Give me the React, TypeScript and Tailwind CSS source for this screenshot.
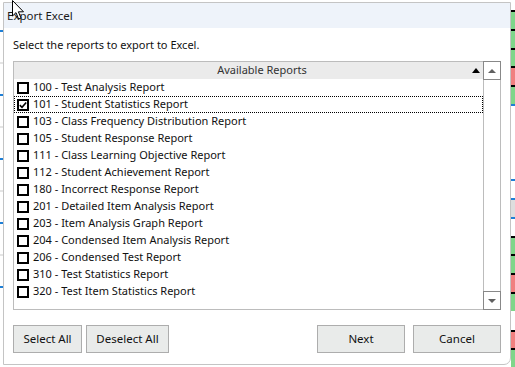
import { useState } from "react";

const REPORTS = [
  "100 - Test Analysis Report",
  "101 - Student Statistics Report",
  "103 - Class Frequency Distribution Report",
  "105 - Student Response Report",
  "111 - Class Learning Objective Report",
  "112 - Student Achievement Report",
  "180 - Incorrect Response Report",
  "201 - Detailed Item Analysis Report",
  "203 - Item Analysis Graph Report",
  "204 - Condensed Item Analysis Report",
  "206 - Condensed Test Report",
  "310 - Test Statistics Report",
  "320 - Test Item Statistics Report",
];

// cells of the sheet peeking out on the right edge behind the dialog
const STRIP = [
  "g", "g", "g", "r", "g", "b", "w", "w", "w", "b", "gr", "b", "g", "g", "r", "g", "w", "r", "g",
];

function Checkbox({ checked }: { checked: boolean }) {
  return (
    <span className="flex h-[12px] w-[12px] shrink-0 items-center justify-center border-2 border-black bg-white">
      {checked && (
        <svg width="8" height="8" viewBox="0 0 8 8">
          <path d="M0.8 4.2 L3 6.3 L7.2 1.4" fill="none" stroke="#000" strokeWidth="1.6" />
        </svg>
      )}
    </span>
  );
}

function Btn({ label, w }: { label: string; w: string }) {
  return (
    <button
      className={`${w} h-[28px] border border-[#adadad] bg-[#e9ebea] text-[11.5px] text-[#111]`}
    >
      {label}
    </button>
  );
}

export default function App() {
  const [checked, setChecked] = useState<Record<number, boolean>>({ 1: true });

  return (
    <div
      className="relative h-[367px] w-[515px] overflow-hidden bg-white"
      style={{ fontFamily: '"Noto Sans", "Open Sans", sans-serif' }}
    >
      {/* background sheet */}
      <div className="absolute left-0 top-0 flex h-full w-[3px] flex-col gap-[30px] pt-[30px]">
        {[0, 1, 2, 3, 4, 5, 6, 7, 8].map((i) => (
          <div key={i} className={`h-[2px] ${i % 2 ? "bg-[#e4e4e4]" : "bg-[#1f7fd6]"}`} />
        ))}
      </div>
      <div className="absolute right-0 top-0 flex h-full w-[4px] flex-col pt-[10px]">
        {STRIP.map((c, i) => (
          <div
            key={i}
            className={`h-[19px] border-t-2 ${
              c === "g"
                ? "border-black bg-[#7fd68a]"
                : c === "r"
                  ? "border-black bg-[#f08080]"
                  : c === "b"
                    ? "border-[#1f7fd6] bg-white"
                    : c === "gr"
                      ? "border-[#1f7fd6] bg-[#dedede]"
                      : "border-transparent bg-white"
            }`}
          />
        ))}
      </div>

      {/* dialog window */}
      <div className="absolute left-[3px] top-[2px] flex h-[363px] w-[508px] flex-col rounded-br-[7px] border border-[#c4c4c4] bg-white">
        <div className="flex h-[25px] items-center bg-[#eef3fa] pl-[3px] text-[11.5px] text-[#1a1a1a]">
          Export Excel
        </div>

        <div className="flex flex-1 flex-col pl-[9px] pr-[9px] pt-[9px]">
          <div className="text-[11px] leading-[16px] text-[#111]">
            Select the reports to export to Excel.
          </div>

          <div className="mt-[8px] flex h-[249px] border border-[#bcbcbc]">
            <div className="flex flex-1 flex-col">
              <div className="relative flex h-[17px] items-center justify-center bg-[#ebebeb] pl-[27px] text-[11px] text-[#333]">
                Available Reports
                <svg
                  className="absolute right-[3px] top-[6px]"
                  width="8"
                  height="5"
                  viewBox="0 0 8 5"
                >
                  <path d="M0 5 L4 0 L8 5 Z" fill="#000" />
                </svg>
              </div>
              {REPORTS.map((r, i) => (
                <div
                  key={r}
                  onClick={() => setChecked({ ...checked, [i]: !checked[i] })}
                  className={`flex h-[17px] items-center gap-[4px] pl-[2px] text-[11px] text-[#111] ${
                    i === 1 ? "border border-dotted border-black" : "border border-transparent"
                  }`}
                >
                  <Checkbox checked={!!checked[i]} />
                  <span className="whitespace-nowrap">{r}</span>
                </div>
              ))}
            </div>

            <div className="flex w-[17px] flex-col justify-between border-l border-[#bcbcbc]">
              <div className="flex h-[17px] items-center justify-center bg-white outline outline-1 outline-[#888]">
                <svg width="8" height="4" viewBox="0 0 8 4">
                  <path d="M0 4 L4 0 L8 4 Z" fill="#606060" />
                </svg>
              </div>
              <div className="flex h-[17px] items-center justify-center bg-white outline outline-1 outline-[#888]">
                <svg width="8" height="4" viewBox="0 0 8 4">
                  <path d="M0 0 L8 0 L4 4 Z" fill="#606060" />
                </svg>
              </div>
            </div>
          </div>

          <div className="mt-[15px] flex items-center">
            <Btn label="Select All" w="w-[69px]" />
            <div className="w-[4px]" />
            <Btn label="Deselect All" w="w-[83px]" />
            <div className="flex-1" />
            <Btn label="Next" w="w-[88px]" />
            <div className="w-[8px]" />
            <Btn label="Cancel" w="w-[88px]" />
          </div>
        </div>
      </div>

      {/* mouse pointer */}
      <svg className="absolute left-[12px] top-0" width="14" height="21" viewBox="0 0 14 21">
        <path
          d="M0.5 0.5 L0.5 16 L4 12.6 L6.6 19 L9 18 L6.4 11.8 L11.5 11.8 Z"
          fill="#fff"
          stroke="#000"
          strokeWidth="1"
        />
      </svg>
    </div>
  );
}
